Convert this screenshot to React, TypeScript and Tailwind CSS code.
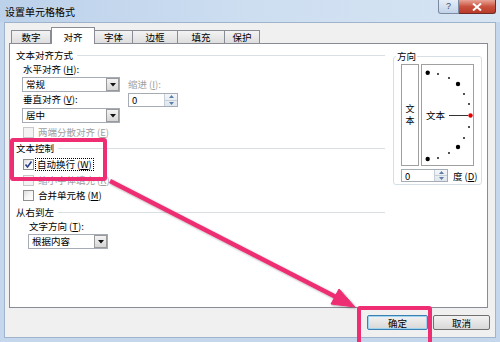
import React from 'react'

const cjk = "font-['SimSun','Noto_Sans_CJK_SC',sans-serif]"

const Check: React.FC<{ checked?: boolean; disabled?: boolean }> = ({ checked, disabled }) => (
  <span
    className={`flex h-[11px] w-[11px] shrink-0 items-center justify-center border ${
      disabled ? 'border-[#c8c8c8] bg-[#f4f4f4]' : 'border-[#8e8f8f] bg-gradient-to-br from-[#dcdcdc] via-[#f6f6f6] to-white'
    }`}>
    {checked && (
      <svg width="9" height="9" viewBox="0 0 9 9">
        <path d="M1.5 4.5 L3.5 7 L7.5 1.5" fill="none" stroke="#2b3f86" strokeWidth="1.6" />
      </svg>
    )}
  </span>
)

const Select: React.FC<{ value: string; w: string }> = ({ value, w }) => (
  <div className={`flex h-[15px] ${w} border border-[#a5acb5] bg-white`}>
    <span className="flex-1 pl-[3px] text-[9.5px] leading-[13px]">{value}</span>
    <span className="flex w-[13px] items-center justify-center border border-[#9a9a9a] bg-gradient-to-b from-[#f4f4f4] to-[#d6d6d6]">
      <svg width="6" height="4" viewBox="0 0 6 4">
        <path d="M0 0 H6 L3 3.5 Z" fill="#111" />
      </svg>
    </span>
  </div>
)

const Spin: React.FC<{ w: string; h: string }> = ({ w, h }) => (
  <div className={`flex ${h} ${w} border border-[#a5acb5] bg-white`}>
    <span className="flex-1 pl-[3px] text-[9.5px] leading-[12px]">0</span>
    <span className="flex w-[13px] flex-col border-l border-[#c6ced8] bg-gradient-to-b from-[#f3f6fa] to-[#dfe6ee]">
      <span className="flex flex-1 items-center justify-center border-b border-[#c6ced8]">
        <svg width="5" height="3" viewBox="0 0 5 3"><path d="M0 3 L2.5 0 L5 3 Z" fill="#5d7ea6" /></svg>
      </span>
      <span className="flex flex-1 items-center justify-center">
        <svg width="5" height="3" viewBox="0 0 5 3"><path d="M0 0 L2.5 3 L5 0 Z" fill="#5d7ea6" /></svg>
      </span>
    </span>
  </div>
)

const GroupLabel: React.FC<{ text: string; className?: string }> = ({ text, className }) => (
  <div className={`flex h-[12px] items-center gap-[4px] pr-[8px] ${className ?? ''}`}>
    <span className="text-[9.5px] leading-[12px]">{text}</span>
    <div className="h-px flex-1 bg-[#d8e0e6]"></div>
  </div>
)

const Key: React.FC<{ k: string }> = ({ k }) => (
  <span className="ml-[2px]">
    (<span className="underline">{k}</span>)
  </span>
)

const tabs = [
  { label: '数字', w: 'w-[40px]' },
  { label: '对齐', w: 'w-[44px]', active: true },
  { label: '字体', w: 'w-[38px]' },
  { label: '边框', w: 'w-[45px]' },
  { label: '填充', w: 'w-[47px]' },
  { label: '保护', w: 'w-[35px]' },
]

const bigDots = [
  [5.7, 7.7],
  [36, 19],
  [36, 82],
  [5.7, 94],
]
const smallDots = [
  [16, 9],
  [27, 13],
  [42, 29],
  [47, 39],
  [47, 62],
  [42, 73],
  [27, 88],
  [16, 93],
]

export default function App() {
  return (
    <div className={`relative h-[342px] w-[500px] overflow-hidden bg-[#c4d7ed] text-black ${cjk}`}>
      {/* Title bar */}
      <div className="flex h-[22px] items-start bg-gradient-to-r from-[#bcd1ea] via-[#cddef1] to-[#d6e4f3]">
        <div className="pl-[5px] pt-[6px] text-[10px] leading-[12px]">设置单元格格式</div>
        <div className="ml-auto mr-[4px] flex">
          <div className="flex h-[14px] w-[21px] items-center justify-center rounded-bl-[3px] border border-t-0 border-[#7b8aa0] bg-gradient-to-b from-[#e4edf7] to-[#c2d3e8] text-[9px] leading-none text-[#3a4a5e] font-['Liberation_Sans',sans-serif]">
            ?
          </div>
          <div className="flex h-[14px] w-[37px] items-center justify-center rounded-br-[3px] border border-l-0 border-t-0 border-[#6e2a2a] bg-gradient-to-b from-[#e6a396] via-[#c9523f] to-[#b93a2a]">
            <svg width="10" height="8" viewBox="0 0 10 8">
              <path d="M1 0.5 L9 7.5 M9 0.5 L1 7.5" stroke="white" strokeWidth="2" />
            </svg>
          </div>
        </div>
      </div>

      {/* Client area */}
      <div className="mx-[4px] h-[316px] border border-[#9fb4cc] bg-[#f0f0f0] px-[4px] pt-[4px]">
        {/* Tabs */}
        <div className="flex h-[16px] items-end pl-[2px]">
          {tabs.map((t) =>
            t.active ? (
              <div
                key={t.label}
                className={`relative z-10 -mb-px flex h-[17px] ${t.w} justify-center border border-b-0 border-[#898c95] bg-white pt-[3px] text-[9.5px] leading-[12px]`}>
                {t.label}
              </div>
            ) : (
              <div
                key={t.label}
                className={`flex h-[13px] ${t.w} justify-center border border-b-0 border-l-0 border-[#898c95] bg-gradient-to-b from-[#f3f3f3] to-[#dedede] text-[9.5px] leading-[12px] first:border-l`}>
                {t.label}
              </div>
            ),
          )}
        </div>

        {/* Panel */}
        <div className="flex h-[265px] w-[479px] border border-[#898c95] bg-white">
          {/* Left column */}
          <div className="w-[383px] pl-[6px]">
            <GroupLabel text="文本对齐方式" className="mt-[5px]" />
            <div className="flex pl-[6px]">
              <div className="w-[98px]">
                <div className="mt-[2px] pl-[1px] text-[9.5px] leading-[12px]">
                  水平对齐<Key k="H" />:
                </div>
                <div className="mt-[2px]">
                  <Select value="常规" w="w-[98px]" />
                </div>
                <div className="mt-[1px] pl-[1px] text-[9.5px] leading-[12px]">
                  垂直对齐<Key k="V" />:
                </div>
                <div className="mt-[3px]">
                  <Select value="居中" w="w-[98px]" />
                </div>
              </div>
              <div className="ml-[8px]">
                <div className="mt-[17px] text-[9.5px] leading-[12px] text-[#a0a0a0]">
                  缩进<Key k="I" />:
                </div>
                <div className="mt-[3px]">
                  <Spin w="w-[50px]" h="h-[14px]" />
                </div>
              </div>
            </div>
            <div className="mt-[3px] flex items-center gap-[4px] pl-[7px] text-[9.5px] leading-[12px] text-[#a0a0a0]">
              <Check disabled />
              <span>
                两端分散对齐<Key k="E" />
              </span>
            </div>

            <GroupLabel text="文本控制" className="mt-[4px]" />
            <div className="mt-[4px] flex items-center gap-[1px] pl-[7px] text-[9.5px] leading-[11px]">
              <Check checked />
              <span className="border border-dotted border-black px-[1px]">
                自动换行<Key k="W" />
              </span>
            </div>
            <div className="mt-[3px] flex items-center gap-[4px] pl-[7px] text-[9.5px] leading-[12px] text-[#a0a0a0]">
              <Check disabled />
              <span>
                缩小字体填充<Key k="K" />
              </span>
            </div>
            <div className="mt-[3px] flex items-center gap-[4px] pl-[7px] text-[9.5px] leading-[12px]">
              <Check />
              <span>
                合并单元格<Key k="M" />
              </span>
            </div>

            <GroupLabel text="从右到左" className="mt-[5px]" />
            <div className="mt-[2px] pl-[13px] text-[9.5px] leading-[12px]">
              文字方向<Key k="T" />:
            </div>
            <div className="mt-[2px] pl-[12px]">
              <Select value="根据内容" w="w-[80px]" />
            </div>
          </div>

          {/* Right column: orientation */}
          <div className="pt-[12px]">
            <div className="relative h-[129px] w-[89px] rounded-[3px] border border-[#d5dfe5] pl-[7px] pt-[7px]">
              <span className="absolute -top-[7px] left-[2px] bg-white px-[1px] text-[9.5px] leading-[12px]">方向</span>
              <div className="flex gap-[2px]">
                <div className="flex h-[102px] w-[18px] flex-col items-center justify-center border border-[#a0a0a0] text-[9px] leading-[12px]">
                  <span>文</span>
                  <span>本</span>
                </div>
                <div className="relative h-[102px] w-[53px] border border-[#a0a0a0]">
                  <svg className="absolute left-0 top-0" width="53" height="102" viewBox="0 0 53 102">
                    {bigDots.map(([x, y]) => (
                      <circle key={`b${x}-${y}`} cx={x} cy={y} r="2.2" fill="#000" />
                    ))}
                    {smallDots.map(([x, y]) => (
                      <circle key={`s${x}-${y}`} cx={x} cy={y} r="0.9" fill="#000" />
                    ))}
                    <line x1="27" y1="50.5" x2="46" y2="50.5" stroke="#333" strokeWidth="1" />
                    <circle cx="48.5" cy="50.5" r="2.2" fill="#e00000" />
                  </svg>
                  <span className="absolute left-[4px] top-[44px] text-[9.5px] leading-[12px]">文本</span>
                </div>
              </div>
              <div className="mt-[3px] flex items-center gap-[5px]">
                <Spin w="w-[47px]" h="h-[13px]" />
                <span className="text-[9.5px] leading-[12px]">
                  度<Key k="D" />
                </span>
              </div>
            </div>
          </div>
        </div>

        {/* Buttons */}
        <div className="mt-[7px] flex justify-end gap-[5px] pr-[1px]">
          <div className="flex h-[15px] w-[61px] items-center justify-center rounded-[2px] border border-[#3c7fb1] bg-gradient-to-b from-[#f2f2f2] to-[#d8d8d8] text-[9.5px] leading-[12px] shadow-[inset_0_0_0_1px_#9fd4f0]">
            确定
          </div>
          <div className="flex h-[15px] w-[57px] items-center justify-center rounded-[2px] border border-[#707070] bg-gradient-to-b from-[#f2f2f2] to-[#d8d8d8] text-[9.5px] leading-[12px]">
            取消
          </div>
        </div>
      </div>

      {/* Annotation overlays */}
      <div className="absolute left-[10px] top-[138px] h-[43px] w-[97px] rounded-[3px] border-[4px] border-[#ee2d72]"></div>
      <div className="absolute left-[357px] top-[306px] h-[40px] w-[75px] rounded-[3px] border-[4px] border-[#ee2d72]"></div>
      <svg className="pointer-events-none absolute left-0 top-0" width="500" height="342" viewBox="0 0 500 342">
        <defs>
          <filter id="sh" x="-10%" y="-10%" width="120%" height="120%">
            <feDropShadow dx="1" dy="1" stdDeviation="1" floodColor="#000" floodOpacity="0.35" />
          </filter>
        </defs>
        <g filter="url(#sh)" fill="#ee2d72" stroke="#ee2d72">
          <line x1="110" y1="181" x2="336" y2="297" strokeWidth="4.5" />
          <polygon points="355,307 331,304 339,289" strokeWidth="1" strokeLinejoin="round" />
        </g>
      </svg>
    </div>
  )
}
